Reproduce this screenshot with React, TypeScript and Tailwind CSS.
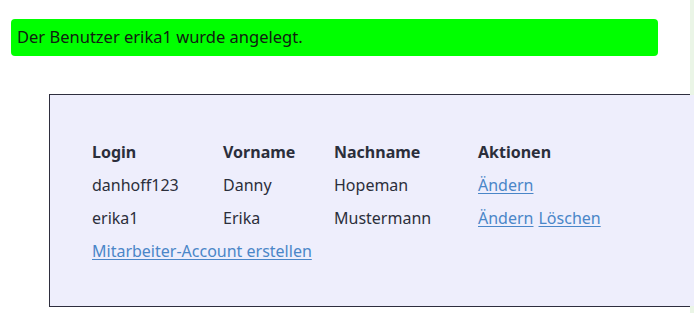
const users = [
  { login: "danhoff123", vorname: "Danny", nachname: "Hopeman", delete: false },
  { login: "erika1", vorname: "Erika", nachname: "Mustermann", delete: true },
];

const Link = ({ children }: { children: React.ReactNode }) => (
  <a href="#" className="text-[#4a86c8] underline underline-offset-2">
    {children}
  </a>
);

export default function App() {
  return (
    <div className="relative h-[313px] w-[694px] overflow-hidden bg-white font-['Noto_Sans',sans-serif] text-[16px] text-[#2b2e3b]">
      <div className="absolute right-0 top-0 h-[95px] w-[4px] bg-[#eaf5e6]" />
      <div className="absolute bottom-0 right-0 h-[7px] w-[4px] bg-[#eaf5e6]" />
      <div className="pl-[11px] pr-[36px] pt-[19px]">
        <div className="flex h-[37px] items-center rounded-[4px] bg-[#00ff00] px-[6px] text-[16.5px] text-[#102010]">
          Der Benutzer erika1 wurde angelegt.
        </div>
      </div>
      <div className="ml-[49px] mt-[38px] h-[213px] w-[660px] border border-[#2e2e3e] bg-[#eeeefc] pl-[42px] pt-[41px]">
        <div className="grid grid-cols-[131px_111px_144px_auto] leading-[33px]">
          <div className="font-bold">Login</div>
          <div className="font-bold">Vorname</div>
          <div className="font-bold">Nachname</div>
          <div className="font-bold">Aktionen</div>
          {users.map((u) => (
            <>
              <div key={u.login + "l"}>{u.login}</div>
              <div>{u.vorname}</div>
              <div>{u.nachname}</div>
              <div className="flex gap-[5px]">
                <Link>Ändern</Link>
                {u.delete && <Link>Löschen</Link>}
              </div>
            </>
          ))}
        </div>
        <div className="leading-[33px]">
          <Link>Mitarbeiter-Account erstellen</Link>
        </div>
      </div>
    </div>
  );
}
